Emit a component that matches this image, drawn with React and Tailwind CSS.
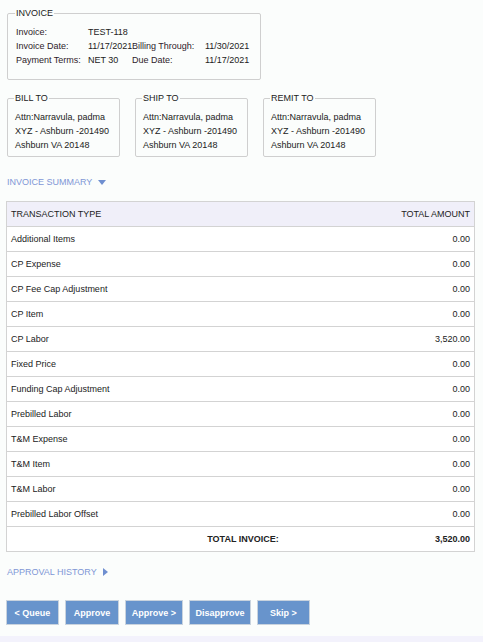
import React from 'react';

const rows = [
  ['Additional Items', '0.00'],
  ['CP Expense', '0.00'],
  ['CP Fee Cap Adjustment', '0.00'],
  ['CP Item', '0.00'],
  ['CP Labor', '3,520.00'],
  ['Fixed Price', '0.00'],
  ['Funding Cap Adjustment', '0.00'],
  ['Prebilled Labor', '0.00'],
  ['T&M Expense', '0.00'],
  ['T&M Item', '0.00'],
  ['T&M Labor', '0.00'],
  ['Prebilled Labor Offset', '0.00'],
];

const address = ['Attn:Narravula, padma', 'XYZ - Ashburn -201490', 'Ashburn VA 20148'];

const AddressBox = ({ title }) => (
  <fieldset className="w-[113px] h-[65px] border border-[#cfcfcf] rounded-[2px] px-[7px] m-0 whitespace-nowrap">
    <legend className="px-[1px] -ml-[1px] text-[9px] leading-[12px]">{title}</legend>
    <div className="mt-[7px] space-y-[2px] text-[9px] leading-[12px]">
      {address.map((line) => (
        <div key={line}>{line}</div>
      ))}
    </div>
  </fieldset>
);

const App = () => {
  const buttons = [
    ['< Queue', 'w-[53px]'],
    ['Approve', 'w-[54px]'],
    ['Approve >', 'w-[58px]'],
    ['Disapprove', 'w-[62px]'],
    ['Skip >', 'w-[53px]'],
  ];

  return (
    <div
      className="w-[483px] h-[642px] bg-[#fbfdfc] text-[#222] flex flex-col"
      style={{ fontFamily: '"Liberation Sans", Arial, sans-serif' }}
    >
      <div className="flex-1 px-[7px] pt-[7px]">
        <fieldset className="w-[254px] h-[73px] border border-[#cfcfcf] rounded-[2px] px-[8px] m-0 whitespace-nowrap">
          <legend className="px-[1px] -ml-[1px] text-[9px] leading-[12px]">INVOICE</legend>
          <div className="mt-[7px] grid grid-cols-[72px_44px_73px_1fr] gap-y-[2px] text-[9px] leading-[12px]">
            <div className="text-[#2e1a2a]">Invoice:</div>
            <div>TEST-118</div>
            <div></div>
            <div></div>
            <div className="text-[#2e1a2a]">Invoice Date:</div>
            <div>11/17/2021</div>
            <div className="text-[#2e1a2a]">Billing Through:</div>
            <div>11/30/2021</div>
            <div className="text-[#2e1a2a]">Payment Terms:</div>
            <div>NET 30</div>
            <div className="text-[#2e1a2a]">Due Date:</div>
            <div>11/17/2021</div>
          </div>
        </fieldset>

        <div className="flex gap-[15px] mt-[12px]">
          <AddressBox title="BILL TO" />
          <AddressBox title="SHIP TO" />
          <AddressBox title="REMIT TO" />
        </div>

        <div className="mt-[19px] flex items-center gap-[6px] text-[9px] leading-[12px] text-[#7f97d6]">
          <span>INVOICE SUMMARY</span>
          <svg width="8" height="5" viewBox="0 0 8 5">
            <path d="M0 0 L8 0 L4 5 Z" fill="#6f8fd0" />
          </svg>
        </div>

        <div className="mt-[13px] -ml-[1px] w-[469px] border border-[#d3d3d3] text-[9px] leading-[12px]">
          <div className="h-[25px] bg-[#f0eff9] flex items-center justify-between px-[4px] border-b border-[#d3d3d3]">
            <span>TRANSACTION TYPE</span>
            <span>TOTAL AMOUNT</span>
          </div>
          {rows.map(([name, amt]) => (
            <div
              key={name}
              className="h-[25px] bg-white flex items-center justify-between px-[4px] border-b border-[#d3d3d3]"
            >
              <span>{name}</span>
              <span>{amt}</span>
            </div>
          ))}
          <div className="h-[24px] bg-white flex items-center px-[4px] font-bold">
            <span className="flex-1 text-center pl-[40px]">TOTAL INVOICE:</span>
            <span>3,520.00</span>
          </div>
        </div>

        <div className="mt-[14px] flex items-center gap-[6px] text-[9px] leading-[12px] text-[#7f97d6]">
          <span>APPROVAL HISTORY</span>
          <svg width="5" height="8" viewBox="0 0 5 8">
            <path d="M0 0 L5 4 L0 8 Z" fill="#6f8fd0" />
          </svg>
        </div>

        <div className="mt-[22px] -ml-[1px] flex gap-[6px]">
          {buttons.map(([label, w]) => (
            <button
              key={label}
              className={`${w} h-[25px] bg-[#6894cc] border border-[#c9d3de] text-white font-bold text-[9px] leading-[12px]`}
            >
              {label}
            </button>
          ))}
        </div>
      </div>
      <div className="h-[6px] bg-[#f3f2fc]"></div>
    </div>
  );
};

export default App;
